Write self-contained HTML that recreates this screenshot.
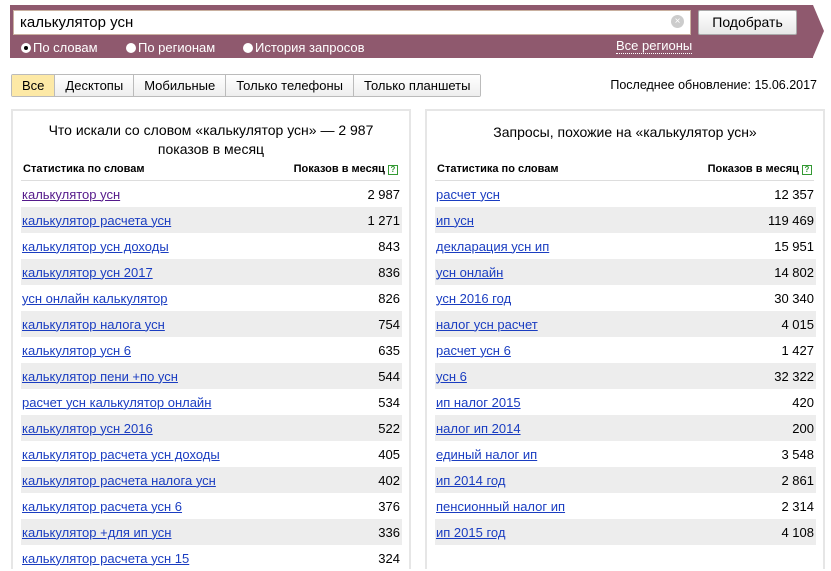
<!DOCTYPE html>
<html><head><meta charset="utf-8"><style>
*{margin:0;padding:0;box-sizing:border-box}
body{width:831px;height:553px;overflow:hidden;background:#fff;font-family:"Liberation Sans",sans-serif;position:relative;color:#000}
.band{position:absolute;left:10px;top:5px;width:803px;height:53px;background:#8f596e}
.arrow{position:absolute;left:813px;top:5px;width:0;height:0;border-top:26.5px solid transparent;border-bottom:26.5px solid transparent;border-left:11px solid #8f596e}
.inp{position:absolute;left:13px;top:10px;width:678px;height:25px;background:#fff;border:1px solid #c9b0a0;font-size:15px;padding:3px 0 0 6px}
.x{position:absolute;left:671px;top:15px;width:13px;height:13px;border-radius:50%;background:#ccc;color:#fff;font-size:10px;text-align:center;line-height:13px}
.btn{position:absolute;left:698px;top:10px;width:99px;height:25px;background:linear-gradient(#fff,#e8e8e8);border:1px solid #aaa;border-radius:2px;font-size:14px;text-align:center;line-height:23px}
.rad{position:absolute;top:40px;color:#fff;font-size:13px}
.rad i{display:inline-block;width:10px;height:10px;border-radius:50%;background:#fff;margin-right:2px;vertical-align:-1px;position:relative}
.rad i.on:after{content:"";position:absolute;left:3px;top:3px;width:4px;height:4px;border-radius:50%;background:#000}
.reg{position:absolute;left:616px;top:39px;color:#fff;font-size:13px;border-bottom:1px dotted #fff;line-height:14px}
.tabs{position:absolute;left:11px;top:74px;height:23px;display:flex;border:1px solid #bbb;border-radius:2px;font-size:13px}
.tabs div{padding:0 10px;line-height:21px;border-left:1px solid #bbb;background:linear-gradient(#fff,#eee)}
.tabs div:first-child{border-left:none;background:#fde9a6}
.upd{position:absolute;right:14px;top:78px;font-size:12.5px}
.panel{position:absolute;top:109px;width:400px;height:460px;border:2px solid #e6e6e6;border-bottom:none}
.title{text-align:center;font-size:14px;line-height:19px;padding-top:10px;height:52px}
.hd{margin:0 9px 0 8px;height:18px;border-bottom:1px solid #ddd;font-size:11px;font-weight:bold;display:flex;justify-content:space-between;padding:0 2px}
.q{display:inline-block;width:10px;height:10px;border:1px solid #393;color:#393;font-size:8px;line-height:8px;text-align:center;vertical-align:0}
.row{margin:0 7px 0 8px;height:26px;display:flex;justify-content:space-between;align-items:center;font-size:13px;padding:0 2px 0 1px}
.row:nth-child(even){background:#ededed}
.row a{color:#1a3dc1;text-decoration:underline}
.v{color:#551a8b!important}
</style></head><body>
<div class="band"></div><div class="arrow"></div>
<div class="inp">калькулятор усн</div><div class="x">×</div>
<div class="btn">Подобрать</div>
<div class="rad" style="left:21px"><i class="on"></i>По словам</div>
<div class="rad" style="left:126px"><i></i>По регионам</div>
<div class="rad" style="left:243px"><i></i>История запросов</div>
<div class="reg">Все регионы</div>
<div class="tabs"><div>Все</div><div>Десктопы</div><div>Мобильные</div><div>Только телефоны</div><div>Только планшеты</div></div>
<div class="upd">Последнее обновление: 15.06.2017</div>
<div class="panel" style="left:11px">
<div class="title">Что искали со словом «калькулятор усн» — 2 987<br>показов в месяц</div>
<div class="hd"><span>Статистика по словам</span><span>Показов в месяц <span class="q">?</span></span></div>
<div>
<div class="row"><a class="v">калькулятор усн</a><span>2 987</span></div>
<div class="row"><a>калькулятор расчета усн</a><span>1 271</span></div>
<div class="row"><a>калькулятор усн доходы</a><span>843</span></div>
<div class="row"><a>калькулятор усн 2017</a><span>836</span></div>
<div class="row"><a>усн онлайн калькулятор</a><span>826</span></div>
<div class="row"><a>калькулятор налога усн</a><span>754</span></div>
<div class="row"><a>калькулятор усн 6</a><span>635</span></div>
<div class="row"><a>калькулятор пени +по усн</a><span>544</span></div>
<div class="row"><a>расчет усн калькулятор онлайн</a><span>534</span></div>
<div class="row"><a>калькулятор усн 2016</a><span>522</span></div>
<div class="row"><a>калькулятор расчета усн доходы</a><span>405</span></div>
<div class="row"><a>калькулятор расчета налога усн</a><span>402</span></div>
<div class="row"><a>калькулятор расчета усн 6</a><span>376</span></div>
<div class="row"><a>калькулятор +для ип усн</a><span>336</span></div>
<div class="row"><a>калькулятор расчета усн 15</a><span>324</span></div>
</div></div>
<div class="panel" style="left:425px">
<div class="title" style="padding-top:12px">Запросы, похожие на «калькулятор усн»</div>
<div class="hd"><span>Статистика по словам</span><span>Показов в месяц <span class="q">?</span></span></div>
<div>
<div class="row"><a>расчет усн</a><span>12 357</span></div>
<div class="row"><a>ип усн</a><span>119 469</span></div>
<div class="row"><a>декларация усн ип</a><span>15 951</span></div>
<div class="row"><a>усн онлайн</a><span>14 802</span></div>
<div class="row"><a>усн 2016 год</a><span>30 340</span></div>
<div class="row"><a>налог усн расчет</a><span>4 015</span></div>
<div class="row"><a>расчет усн 6</a><span>1 427</span></div>
<div class="row"><a>усн 6</a><span>32 322</span></div>
<div class="row"><a>ип налог 2015</a><span>420</span></div>
<div class="row"><a>налог ип 2014</a><span>200</span></div>
<div class="row"><a>единый налог ип</a><span>3 548</span></div>
<div class="row"><a>ип 2014 год</a><span>2 861</span></div>
<div class="row"><a>пенсионный налог ип</a><span>2 314</span></div>
<div class="row"><a>ип 2015 год</a><span>4 108</span></div>
<div class="row"><a></a><span></span></div>
</div></div>
</body></html>
